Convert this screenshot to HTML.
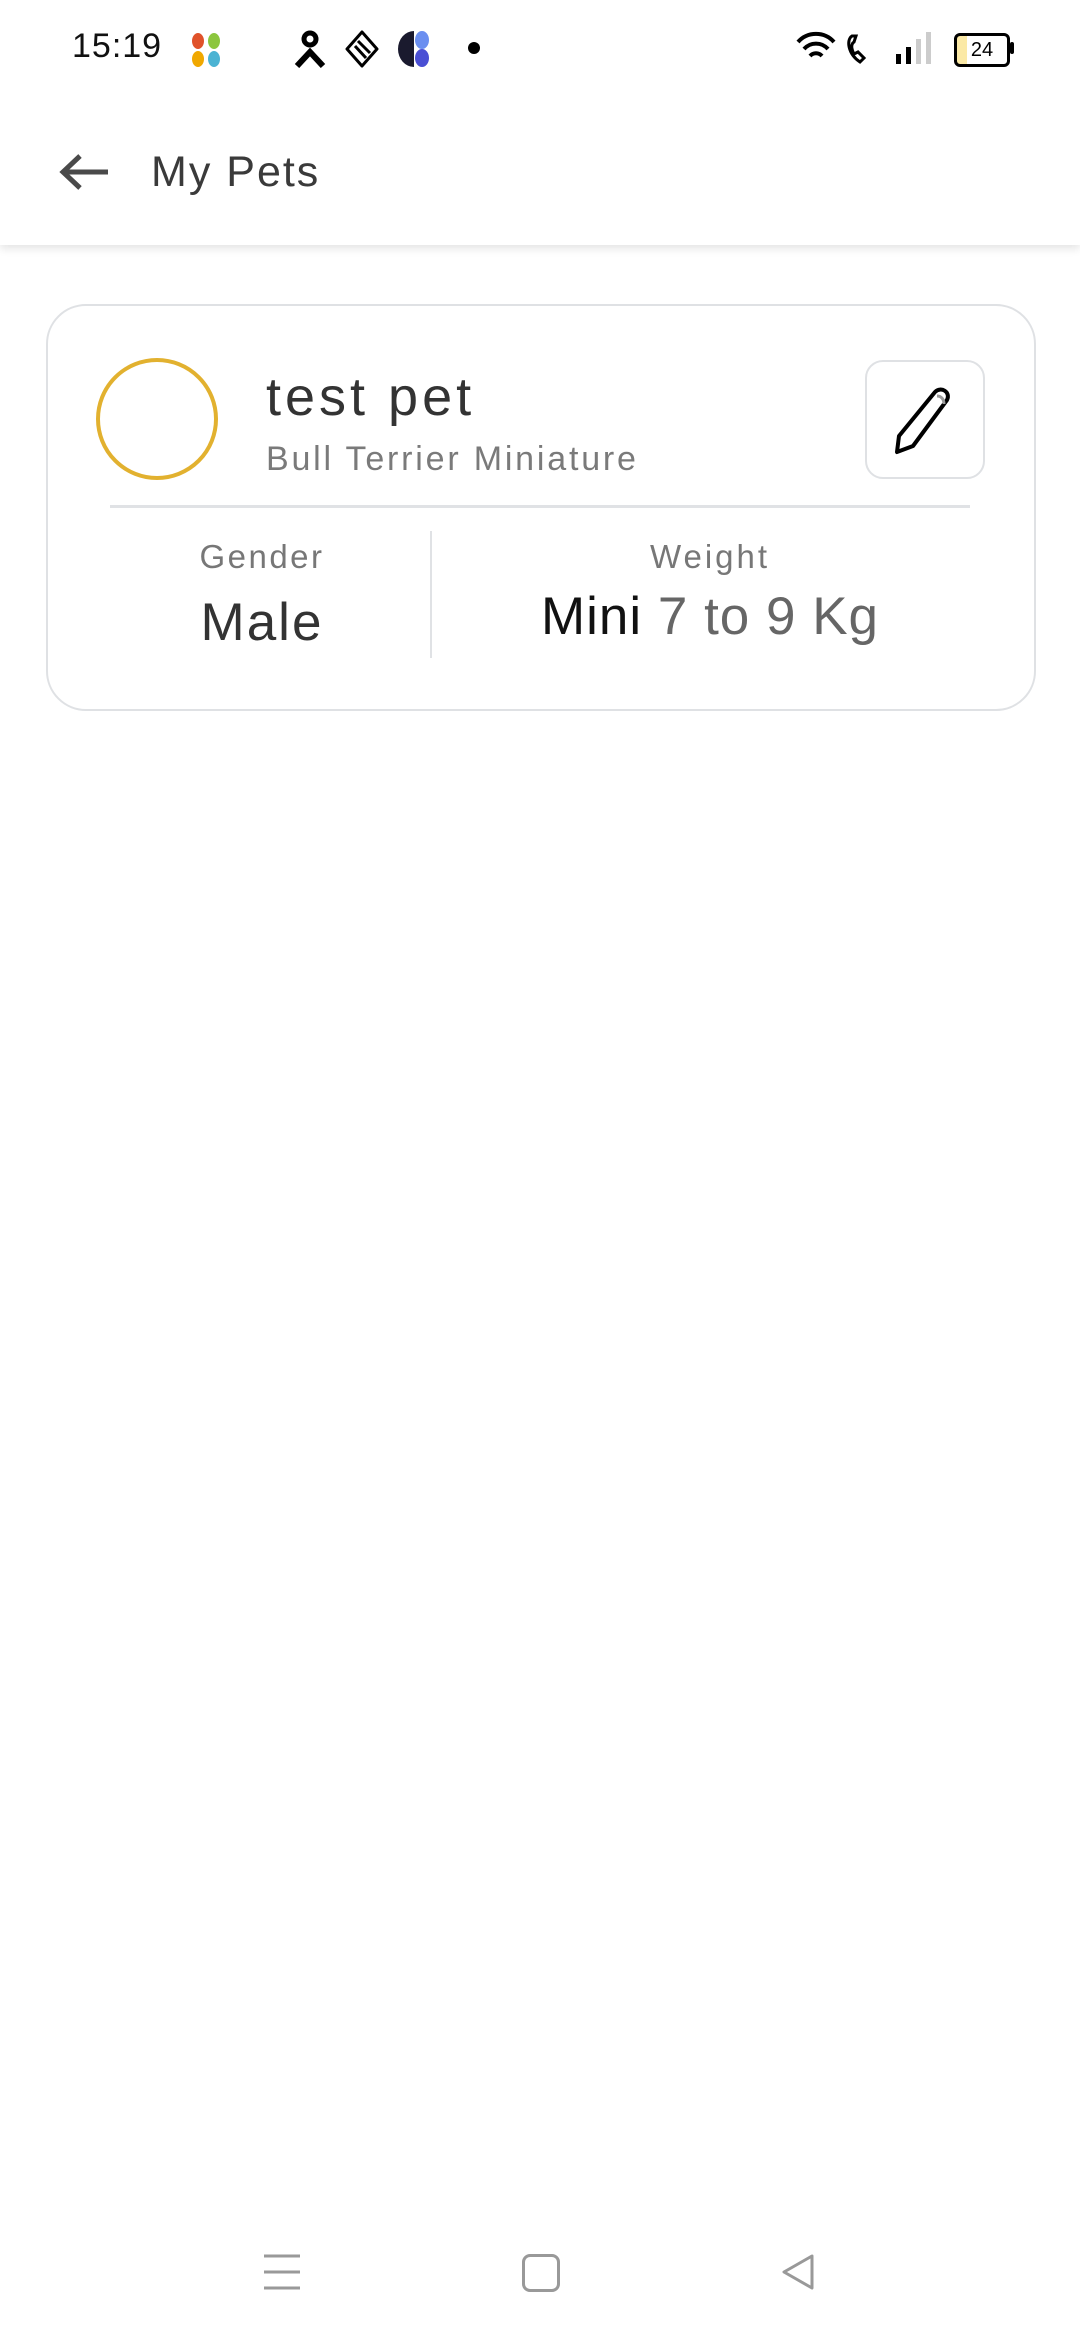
<!DOCTYPE html>
<html><head><meta charset="utf-8"><style>
html,body{margin:0;padding:0;width:1080px;height:2340px;background:#fff;font-family:"Liberation Sans",sans-serif;overflow:hidden;position:relative}
.a{position:absolute;white-space:nowrap}
</style></head><body>
<div class="a" style="left:72px;top:27px;font-size:34px;color:#111;letter-spacing:1px">15:19</div>
<svg class="a" style="left:186px;top:30px" width="40" height="40" viewBox="0 0 40 40">
<ellipse cx="12" cy="11" rx="6" ry="8" fill="#e0522a"/><ellipse cx="28" cy="11" rx="6" ry="8" fill="#8cc63e"/>
<ellipse cx="12" cy="29" rx="6" ry="8" fill="#f0a800"/><ellipse cx="28" cy="29" rx="6" ry="8" fill="#4bb3d3"/></svg>
<svg class="a" style="left:292px;top:30px" width="36" height="38" viewBox="0 0 36 38"><circle cx="18" cy="9" r="6" fill="none" stroke="#000" stroke-width="5"/><path d="M5 36 L18 22 L31 36" fill="none" stroke="#000" stroke-width="6"/></svg>
<svg class="a" style="left:344px;top:30px" width="36" height="38" viewBox="0 0 36 38"><path d="M18 2 L33 19 L18 36 L3 19Z" fill="none" stroke="#000" stroke-width="3" stroke-linejoin="round"/><path d="M11 16 L22 28 M14 11 L26 23" stroke="#000" stroke-width="3"/></svg>
<svg class="a" style="left:396px;top:29px" width="36" height="40" viewBox="0 0 36 40"><path d="M18 2 A16 18 0 0 0 18 38Z" fill="#1a1a2e"/><ellipse cx="26" cy="11" rx="7" ry="9" fill="#6b8ff0"/><ellipse cx="26" cy="29" rx="7" ry="9" fill="#4a4fd4"/></svg>
<div class="a" style="left:468px;top:42px;width:12px;height:12px;border-radius:6px;background:#000"></div>
<svg class="a" style="left:796px;top:30px" width="150" height="36" viewBox="0 0 150 36">
<path d="M2 12 A24 24 0 0 1 38 12" fill="none" stroke="#000" stroke-width="4"/><path d="M8 19 A16 16 0 0 1 32 19" fill="none" stroke="#000" stroke-width="4"/><path d="M14 26 A8 8 0 0 1 26 26" fill="none" stroke="#000" stroke-width="4"/>
<path d="M56 6 C50 10 52 24 64 32 L68 28 L62 22 L58 24 C55 18 55 14 58 12 L60 6Z" fill="none" stroke="#000" stroke-width="3"/>
<rect x="100" y="24" width="5" height="10" fill="#000"/><rect x="110" y="17" width="5" height="17" fill="#000"/><rect x="120" y="9" width="5" height="25" fill="#ccc"/><rect x="130" y="2" width="5" height="32" fill="#ccc"/></svg>
<div class="a" style="left:954px;top:33px;width:50px;height:28px;border:3px solid #000;border-radius:6px;background:linear-gradient(90deg,#fbe9a6 0 20%,#fff 20%);font-size:20px;text-align:center;line-height:28px">24</div>
<div class="a" style="left:1010px;top:42px;width:4px;height:12px;background:#000;border-radius:2px"></div>
<div class="a" style="left:0;top:0;width:1080px;height:245px;box-shadow:0 4px 8px rgba(0,0,0,0.10)"></div>
<svg class="a" style="left:58px;top:152px" width="52" height="40" viewBox="0 0 52 40"><path d="M50 20 H6 M22 4 L5 20 L22 36" fill="none" stroke="#4a4a4a" stroke-width="5"/></svg>
<div class="a" style="left:151px;top:148px;font-size:43px;color:#3a3a3a;letter-spacing:2px">My Pets</div>
<div class="a" style="left:46px;top:304px;width:986px;height:403px;border:2px solid #dfe1e4;border-radius:40px"></div>
<div class="a" style="left:96px;top:358px;width:114px;height:114px;border:4px solid #e2b12f;border-radius:50%"></div>
<div class="a" style="left:266px;top:366px;font-size:54px;color:#333;letter-spacing:4px">test pet</div>
<div class="a" style="left:266px;top:440px;font-size:34px;color:#7a7a7a;letter-spacing:2.8px">Bull Terrier Miniature</div>
<div class="a" style="left:865px;top:360px;width:116px;height:115px;border:2px solid #dfe1e4;border-radius:18px"></div>
<svg class="a" style="left:885px;top:380px" width="76" height="76" viewBox="0 0 76 76"><path d="M50 12 C56 6 66 12 62 20 L28 66 L12 72 L14 56Z" fill="none" stroke="#000" stroke-width="4" stroke-linejoin="round"/><path d="M52 16 C56 16 59 19 59 24" fill="none" stroke="#999" stroke-width="3"/></svg>
<div class="a" style="left:110px;top:505px;width:860px;height:3px;background:#e0e2e5"></div>
<div class="a" style="left:430px;top:531px;width:2px;height:127px;background:#e0e2e5"></div>
<div class="a" style="left:62px;width:400px;top:538px;text-align:center;font-size:33px;color:#777;letter-spacing:2.5px">Gender</div>
<div class="a" style="left:62px;width:400px;top:592px;text-align:center;font-size:53px;color:#333;letter-spacing:2px">Male</div>
<div class="a" style="left:510px;width:400px;top:538px;text-align:center;font-size:33px;color:#777;letter-spacing:3px">Weight</div>
<div class="a" style="left:460px;width:500px;top:586px;text-align:center;font-size:53px;color:#666;letter-spacing:1px"><span style="color:#111">Mini</span> 7 to 9 Kg</div>
<svg class="a" style="left:262px;top:2252px" width="40" height="40" viewBox="0 0 40 40"><path d="M2 4 H38 M2 20 H38 M2 36 H38" stroke="#999" stroke-width="3"/></svg>
<div class="a" style="left:522px;top:2254px;width:32px;height:32px;border:3px solid #999;border-radius:8px"></div>
<svg class="a" style="left:778px;top:2252px" width="40" height="40" viewBox="0 0 40 40"><path d="M34 4 L6 20 L34 36Z" fill="none" stroke="#999" stroke-width="3" stroke-linejoin="round"/></svg>
</body></html>
